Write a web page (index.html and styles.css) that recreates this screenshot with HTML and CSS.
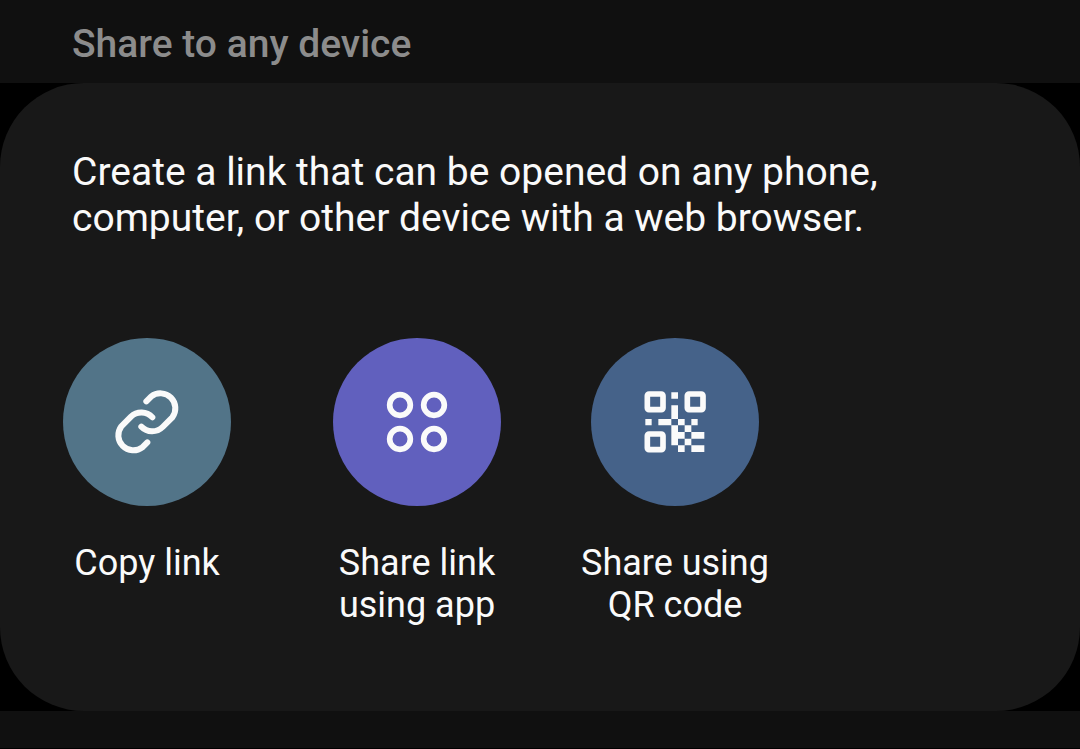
FILE: index.html
```html
<!DOCTYPE html>
<html lang="en">
<head>
<meta charset="utf-8">
<meta name="viewport" content="width=device-width, initial-scale=1">
<title>Share to any device</title>
<link rel="stylesheet" href="styles.css">
</head>
<body>
<main class="sheet">
  <h1 class="sheet-title">Share to any device</h1>
  <div class="card-wrap">
    <section class="card">
      <p class="description">Create a link that can be opened on any phone, computer, or other device with a web browser.</p>
      <div class="actions">
        <button class="action" type="button">
          <span class="disc disc-copy">
            <svg class="icon" viewBox="-3 -3 288 288" aria-hidden="true">
              <g fill="none" stroke="currentColor" stroke-width="18" stroke-linecap="round" stroke-linejoin="round">
                <path d="M139 79L154 64A45 45 0 0 1 217 127L188 156A45 45 0 0 1 124 155"/>
                <path d="M142 202L127 217A45 45 0 0 1 64 154L93 125A45 45 0 0 1 157 127"/>
              </g>
            </svg>
          </span>
          <span class="label">Copy link</span>
        </button>
        <button class="action" type="button">
          <span class="disc disc-app">
            <svg class="icon" viewBox="-3 -3 288 288" aria-hidden="true">
              <g fill="none" stroke="currentColor" stroke-width="17">
                <circle cx="90" cy="90" r="31"/>
                <circle cx="192" cy="90" r="31"/>
                <circle cx="90" cy="192" r="31"/>
                <circle cx="192" cy="192" r="31"/>
              </g>
            </svg>
          </span>
          <span class="label">Share link<br>using app</span>
        </button>
        <button class="action action-last" type="button">
          <span class="disc disc-qr">
            <svg class="icon" viewBox="-9 -12 288 288" aria-hidden="true">
              <g fill="none" stroke="currentColor" stroke-width="17">
                <rect x="52" y="48" width="47" height="47" rx="5"/>
                <rect x="172" y="48" width="47" height="47" rx="5"/>
                <rect x="52" y="168" width="47" height="47" rx="5"/>
              </g>
              <path fill="currentColor" d="M124 43h20v19h-20zM124 82h20v41h-20zM46 123h19v19H46zM85 123h39v19H85zM144 123h20v19h-20zM184 123h19v19h-19zM124 142h20v60h-20zM164 142h20v20h-20zM144 162h20v20h-20zM184 162h39v20h-39zM164 182h20v20h-20zM144 202h20v20h-20zM184 202h39v20h-39z"/>
            </svg>
          </span>
          <span class="label">Share using<br>QR code</span>
        </button>
      </div>
    </section>
  </div>
</main>
</body>
</html>
```
FILE: styles.css
```css
* {
  box-sizing: border-box;
}

body {
  margin: 0;
  background: #101010;
  color: #fafafa;
  font-family: Roboto, "Noto Sans", sans-serif;
}

.sheet {
  min-height: 100vh;
  border-bottom: 1px solid #000;
}

.sheet-title {
  margin: 0;
  padding: 21px 72px 16px;
  color: #8c8c8c;
  font-size: 39px;
  font-weight: 500;
  line-height: 46px;
}

.card-wrap {
  background: #000;
}

.card {
  padding: 66px 41px 85px;
  border-radius: 84px;
  background: #181818;
}

.description {
  max-width: 900px;
  margin: 0 0 97px;
  padding: 0 31px;
  font-size: 39px;
  line-height: 46px;
}

.actions {
  display: flex;
  align-items: flex-start;
  gap: 58px;
}

.action {
  display: flex;
  flex-direction: column;
  align-items: center;
  gap: 36px;
  width: 212px;
  padding: 0;
  border: 0;
  background: none;
  color: inherit;
  font: inherit;
  cursor: pointer;
}

.action-last {
  width: 188px;
}

.disc {
  display: grid;
  place-items: center;
  width: 168px;
  height: 168px;
  border-radius: 50%;
}

.disc-copy {
  background: #527488;
}

.disc-app {
  background: #6160be;
}

.disc-qr {
  background: #456289;
}

.icon {
  width: 96px;
  height: 96px;
}

.label {
  font-size: 36px;
  line-height: 42px;
  white-space: nowrap;
}
```
